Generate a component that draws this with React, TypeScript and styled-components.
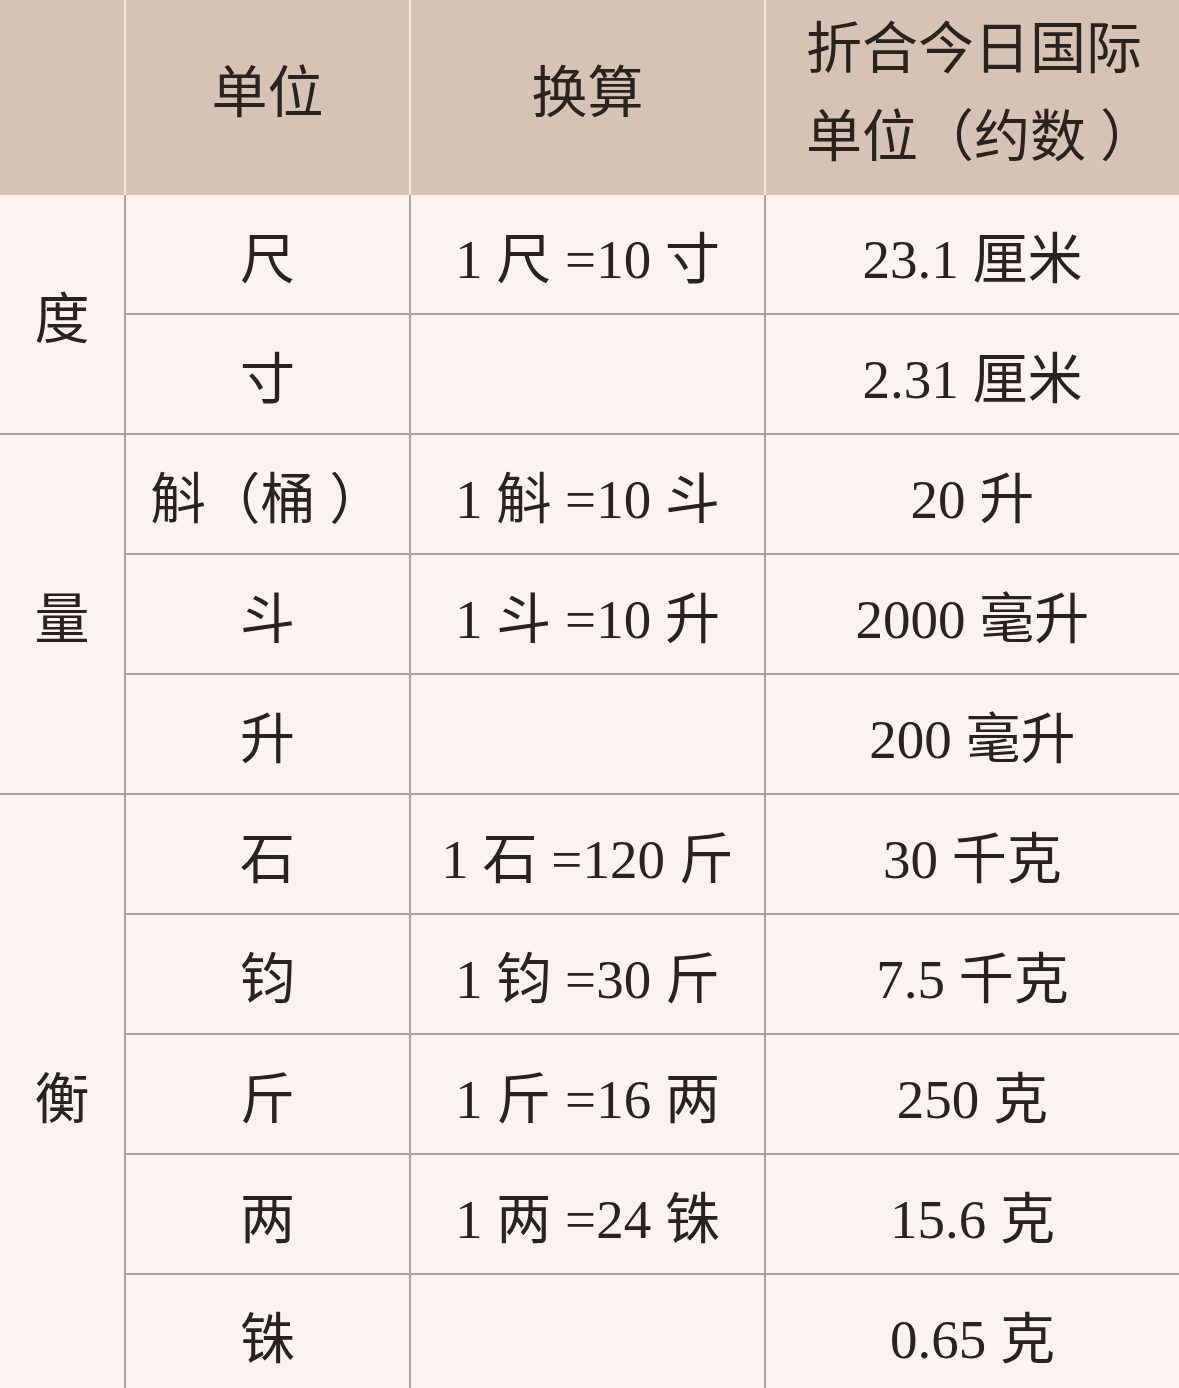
import React from "react";
import styled, { createGlobalStyle } from "styled-components";

const Global = createGlobalStyle`
  html, body { margin: 0; padding: 0; background: #fbf3f0; }
  body { overflow: hidden; }
`;

const COLS = "124px 283px 353px 413px";

const Page = styled.div`
  width: 1179px;
  height: 1388px;
  overflow: hidden;
  background: #fbf3f0;
  font-family: "Liberation Serif", "Noto Sans CJK SC", serif;
  color: #2a221e;
`;

const HeaderRow = styled.div`
  display: grid;
  grid-template-columns: ${COLS};
  column-gap: 2px;
  background: #f1e6dc;
  height: 195px;
`;

const HeadCell = styled.div<{ $left?: boolean }>`
  background: #d6c3b5;
  display: flex;
  align-items: center;
  justify-content: ${(p) => (p.$left ? "flex-start" : "center")};
  padding-left: ${(p) => (p.$left ? "40px" : "0")};
  font-size: 56px;
  line-height: 88px;
  text-align: left;
  white-space: pre;
  padding-bottom: 10px;
`;

const Body = styled.div`
  display: grid;
  grid-template-columns: ${COLS};
  grid-auto-rows: 118px;
  gap: 2px;
  background: #a9a29d;
`;

const Cell = styled.div<{ $span?: number }>`
  background: #fbf3f0;
  display: flex;
  align-items: center;
  justify-content: center;
  font-size: 55px;
  white-space: pre;
  ${(p) => (p.$span ? `grid-row: span ${p.$span};` : "")}
`;

type Row = [string, string, string];
const groups: { label: string; rows: Row[] }[] = [
  {
    label: "度",
    rows: [
      ["尺", "1 尺 =10 寸", "23.1 厘米"],
      ["寸", "", "2.31 厘米"],
    ],
  },
  {
    label: "量",
    rows: [
      ["斛（桶 ）", "1 斛 =10 斗", "20 升"],
      ["斗", "1 斗 =10 升", "2000 毫升"],
      ["升", "", "200 毫升"],
    ],
  },
  {
    label: "衡",
    rows: [
      ["石", "1 石 =120 斤", "30 千克"],
      ["钧", "1 钧 =30 斤", "7.5 千克"],
      ["斤", "1 斤 =16 两", "250 克"],
      ["两", "1 两 =24 铢", "15.6 克"],
      ["铢", "", "0.65 克"],
    ],
  },
];

export default function App() {
  return (
    <Page>
      <Global />
      <HeaderRow>
        <HeadCell />
        <HeadCell>单位</HeadCell>
        <HeadCell>换算</HeadCell>
        <HeadCell $left>
          <div>
            折合今日国际
            <br />
            单位（约数 ）
          </div>
        </HeadCell>
      </HeaderRow>
      <Body>
        {groups.map((g) =>
          g.rows.map((r, i) => (
            <React.Fragment key={g.label + i}>
              {i === 0 && <Cell $span={g.rows.length}>{g.label}</Cell>}
              <Cell>{r[0]}</Cell>
              <Cell>{r[1]}</Cell>
              <Cell>{r[2]}</Cell>
            </React.Fragment>
          ))
        )}
      </Body>
    </Page>
  );
}
